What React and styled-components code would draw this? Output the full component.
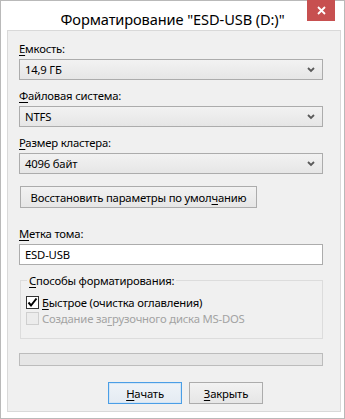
import React from 'react';
import styled, { createGlobalStyle } from 'styled-components';

const GlobalStyle = createGlobalStyle`
  html, body {
    margin: 0;
    padding: 0;
    background: #ffffff;
  }
  body {
    font-family: "Noto Sans", "Open Sans", sans-serif;
    font-size: 11.3px;
    letter-spacing: -0.2px;
    color: #000;
  }
`;

const Window = styled.div`
  box-sizing: border-box;
  width: 345px;
  height: 419px;
  border: 1px solid #b9b9b9;
  background: #ffffff;
  display: flex;
  flex-direction: column;
`;

const TitleBar = styled.div`
  position: relative;
  height: 29px;
  display: flex;
  justify-content: center;
`;

const Title = styled.div`
  font-size: 14.6px;
  letter-spacing: -0.1px;
  line-height: 20px;
  margin-top: 8px;
  color: #000;
  white-space: nowrap;
`;

const CloseButton = styled.div`
  position: absolute;
  top: -1px;
  right: 9px;
  width: 28px;
  height: 21px;
  background: #c75050;
  display: flex;
  align-items: center;
  justify-content: center;
`;

const Client = styled.div`
  box-sizing: border-box;
  margin: 0 3px 0 6px;
  height: 382px;
  border: 1px solid #d9d9d9;
  background: #f0f0f0;
  padding: 10px 0 0 11px;
  display: flex;
  flex-direction: column;
`;

const Label = styled.div`
  line-height: 15px;
  margin-top: ${p => p.$top || 0}px;
  margin-bottom: 3px;
  white-space: nowrap;
`;

const Key = styled.span`
  text-decoration: underline;
  text-underline-offset: 2px;
`;

const Combo = styled.div`
  box-sizing: border-box;
  width: 304px;
  height: 21px;
  border: 1px solid #acacac;
  background: linear-gradient(#f2f2f2, #e6e6e6);
  display: flex;
  align-items: center;
  justify-content: space-between;
  padding: 0 7px 0 5px;
  white-space: nowrap;
`;

const TextBox = styled.div`
  box-sizing: border-box;
  width: 304px;
  height: 21px;
  border: 1px solid #acacac;
  background: #ffffff;
  display: flex;
  align-items: center;
  padding: 0 5px;
`;

const Button = styled.div`
  box-sizing: border-box;
  height: 22px;
  width: ${p => p.$width}px;
  border: 1px solid ${p => (p.$default ? '#4a9ee6' : '#acacac')};
  background: ${p =>
    p.$default ? 'linear-gradient(#eef3f8, #e4ebf2)' : 'linear-gradient(#f2f2f2, #e6e6e6)'};
  box-shadow: ${p => (p.$default ? 'inset 0 0 0 1px #d3e5f5' : 'none')};
  display: flex;
  align-items: center;
  justify-content: center;
  white-space: nowrap;
`;

const RestoreRow = styled.div`
  margin-top: 12px;
  margin-left: 1px;
`;

const Group = styled.fieldset`
  box-sizing: border-box;
  width: 303px;
  height: 66px;
  margin: 8px 0 0 1px;
  padding: 7px 0 0 5px;
  border: 1px solid #dcdcdc;
  display: flex;
  flex-direction: column;
  gap: 1px;
`;

const Legend = styled.legend`
  padding: 0 2px;
  line-height: 15px;
  margin-left: 1px;
`;

const CheckRow = styled.div`
  display: flex;
  align-items: center;
  gap: 3px;
  line-height: 15px;
  color: ${p => (p.$disabled ? '#a3a3a3' : '#000')};
`;

const Box = styled.div`
  box-sizing: border-box;
  width: 13px;
  height: 13px;
  border: 1px solid ${p => (p.$disabled ? '#cfcfcf' : '#333333')};
  background: ${p => (p.$disabled ? '#ececec' : '#ffffff')};
  display: flex;
  align-items: center;
  justify-content: center;
`;

const Progress = styled.div`
  box-sizing: border-box;
  width: 304px;
  height: 13px;
  margin-top: 14px;
  border: 1px solid #bcbcbc;
  background: #e6e6e6;
`;

const Footer = styled.div`
  display: flex;
  gap: 7px;
  margin: 16px 0 0 89px;
`;

const Chevron = () => (
  <svg width="8" height="6" viewBox="0 0 8 6">
    <polyline points="1,1 4,4 7,1" fill="none" stroke="#5a5a5a" strokeWidth="1.8" />
  </svg>
);

const Check = () => (
  <svg width="11" height="11" viewBox="0 0 11 11">
    <polyline points="1.5,5.5 4,8.5 9.5,1.5" fill="none" stroke="#000" strokeWidth="2" />
  </svg>
);

export default function App() {
  return (
    <>
      <GlobalStyle />
      <Window>
        <TitleBar>
          <Title>Форматирование "ESD-USB (D:)"</Title>
          <CloseButton>
            <svg width="9" height="9" viewBox="0 0 9 9">
              <path d="M1 1L8 8M8 1L1 8" stroke="#fff" strokeWidth="1.8" />
            </svg>
          </CloseButton>
        </TitleBar>
        <Client>
          <Label><Key>Е</Key>мкость:</Label>
          <Combo>14,9 ГБ<Chevron /></Combo>

          <Label $top={8}><Key>Ф</Key>айловая система:</Label>
          <Combo>NTFS<Chevron /></Combo>

          <Label $top={8}><Key>Р</Key>азмер кластера:</Label>
          <Combo>4096 байт<Chevron /></Combo>

          <RestoreRow>
            <Button $width={237}>Восстановить параметры по умол<Key>ч</Key>анию</Button>
          </RestoreRow>

          <Label $top={18}><Key>М</Key>етка тома:</Label>
          <TextBox>ESD-USB</TextBox>

          <Group>
            <Legend><Key>С</Key>пособы форматирования:</Legend>
            <CheckRow>
              <Box><Check /></Box>
              <span><Key>Б</Key>ыстрое (очистка оглавления)</span>
            </CheckRow>
            <CheckRow $disabled>
              <Box $disabled />
              <span>Создание за<Key>г</Key>рузочного диска MS-DOS</span>
            </CheckRow>
          </Group>

          <Progress />

          <Footer>
            <Button $width={74} $default><span><Key>Н</Key>ачать</span></Button>
            <Button $width={74}><span><Key>З</Key>акрыть</span></Button>
          </Footer>
        </Client>
      </Window>
    </>
  );
}
